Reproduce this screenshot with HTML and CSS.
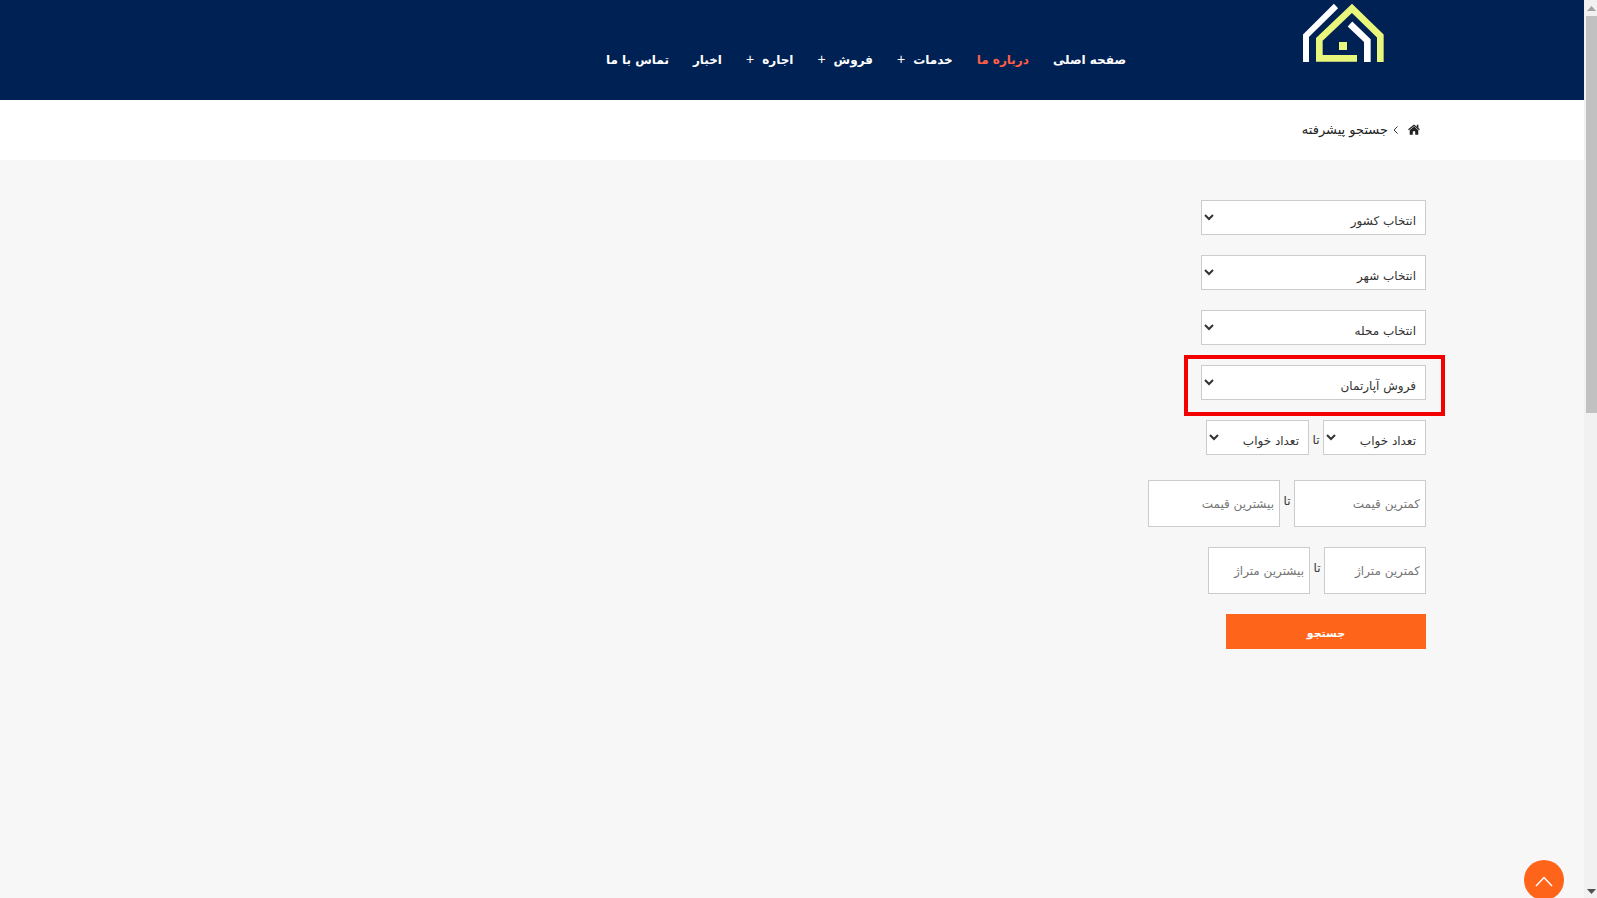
FILE: index.html
```html
<!DOCTYPE html>
<html lang="fa" dir="rtl">
<head>
<meta charset="utf-8">
<title>جستجو پیشرفته</title>
<link rel="stylesheet" href="styles.css">
</head>
<body>
<div class="scrollbar" aria-hidden="true">
  <svg class="scroll-arrow" viewBox="0 0 11 16"><path d="M1 11h9L5.500 6z" fill="#a3a3a3"/></svg>
  <div class="scroll-thumb"></div>
  <svg class="scroll-arrow scroll-end" viewBox="0 0 11 16"><path d="M1 7h9L5.500 12z" fill="#505050"/></svg>
</div>
<div class="page">
  <header class="header">
    <div class="container header-row">
      <a class="logo" href="#" aria-label="صفحه اصلی">
        <svg viewBox="66 9 249 177" fill="none">
          <path d="M78 186V107L168 18" stroke="#fff" stroke-width="18"/>
          <path d="M301 186V108L216 25L118 118V175H231" stroke="#e8f77b" stroke-width="20"/>
          <path d="M262 186V122L210 72" stroke="#fff" stroke-width="20"/>
          <path d="M177 126h24v24h-24z" fill="#e8f77b"/>
        </svg>
      </a>
      <nav class="nav">
        <a href="#">صفحه اصلی</a>
        <a class="active" href="#">درباره ما</a>
        <a class="has-menu" href="#">خدمات</a>
        <a class="has-menu" href="#">فروش</a>
        <a class="has-menu" href="#">اجاره</a>
        <a href="#">اخبار</a>
        <a href="#">تماس با ما</a>
      </nav>
    </div>
  </header>
  <div class="crumbs">
    <div class="container crumb-row">
      <a class="home" href="#" aria-label="خانه">
        <svg viewBox="0 0 12 11" fill="#222"><path d="M6 2.600L10.300 6.200V10.200Q10.300 10.700 9.800 10.700H7.200V7.300H4.800V10.700H2.200Q1.700 10.700 1.700 10.200V6.200z"/><path d="M.5 5.800L6 1.200L11.500 5.800" fill="none" stroke="#222" stroke-width="1.200"/><path d="M8.800.8h1.600v3.400L8.800 2.900z"/></svg>
      </a>
      <svg class="crumb-sep" viewBox="0 0 5 8" fill="none"><path d="M4.500.5L1 4L4.500 7.500" stroke="#333"/></svg>
      <span>جستجو پیشرفته</span>
    </div>
  </div>
  <main class="container">
    <form class="search">
      <select class="field wide" aria-label="کشور"><option>انتخاب کشور</option></select>
      <select class="field wide" aria-label="شهر"><option>انتخاب شهر</option></select>
      <select class="field wide" aria-label="محله"><option>انتخاب محله</option></select>
      <div class="marked"><select class="field wide" aria-label="نوع ملک"><option>فروش آپارتمان</option></select></div>
      <div class="range rooms">
        <select class="field" aria-label="کمترین تعداد خواب"><option>تعداد خواب</option></select>
        <span class="to">تا</span>
        <select class="field" aria-label="بیشترین تعداد خواب"><option>تعداد خواب</option></select>
      </div>
      <div class="range price">
        <input class="field" type="text" placeholder="کمترین قیمت" aria-label="کمترین قیمت">
        <span class="to">تا</span>
        <input class="field" type="text" placeholder="بیشترین قیمت" aria-label="بیشترین قیمت">
      </div>
      <div class="range area">
        <input class="field" type="text" placeholder="کمترین متراژ" aria-label="کمترین متراژ">
        <span class="to">تا</span>
        <input class="field" type="text" placeholder="بیشترین متراژ" aria-label="بیشترین متراژ">
      </div>
      <button class="submit" type="submit">جستجو</button>
    </form>
  </main>
  <button class="to-top" type="button" aria-label="بازگشت به بالا">
    <svg viewBox="0 0 18 11" fill="none"><path d="M1 10L9 1.500L17 10" stroke="#fff" stroke-width="1.500"/></svg>
  </button>
</div>
</body>
</html>
```
FILE: styles.css
```css
* { box-sizing: border-box; }

body {
  margin: 0;
  display: flex;
  height: 100vh;
  overflow: hidden;
  background: #f7f7f7;
  color: #333;
  font: 12px/20px "DejaVu Sans", sans-serif;
}

a { color: inherit; text-decoration: none; }
svg { display: block; }

.page { flex: 1; min-width: 0; }
.container { max-width: 1268px; margin: 0 auto; }

.header { background: #002154; color: #fff; }
.header-row {
  display: flex;
  align-items: flex-start;
  height: 100px;
  padding-right: 41px;
}
.logo { margin-top: 3px; }
.logo svg { width: 83px; height: 59px; }

.nav {
  display: flex;
  gap: 24px;
  margin: 48px 176px 0 0;
  font-size: 12px;
  font-weight: bold;
  line-height: 24px;
  white-space: nowrap;
}
.nav .active { color: #ff5f45; }
.has-menu::after {
  content: "+";
  margin-right: 8px;
  font: 14px "Liberation Sans", sans-serif;
}

.crumbs { background: #fff; color: #222; font-size: 13px; }
.crumb-row {
  display: flex;
  align-items: center;
  height: 60px;
  padding-right: 6px;
}
.home { padding-bottom: 2px; }
.home svg { width: 12px; height: 11px; }
.crumb-sep { width: 5px; height: 8px; margin: 0 10px 0 5px; }

.search {
  display: flex;
  flex-direction: column;
  align-items: flex-start;
  gap: 20px;
  padding-top: 40px;
}
.field {
  height: 35px;
  padding: 6px 5px 0;
  border: 1px solid #ccc;
  border-radius: 0;
  background-color: #fff;
  color: #333;
  font: inherit;
}
.wide { width: 225px; }
.marked { position: relative; display: flex; }
.marked::after {
  content: "";
  position: absolute;
  inset: -10px -19px -16px -17px;
  border: 4px solid #f30000;
  pointer-events: none;
}

.range { display: flex; align-items: center; }
.to { width: 14px; text-align: center; font-size: 12px; }
.rooms { margin-bottom: 5px; }
.rooms .field { width: 103px; }
.rooms .to { padding-top: 4px; }
.price .field { width: 132px; height: 47px; padding-top: 0; }
.area .field { width: 102px; height: 47px; padding-top: 0; }
.price .to, .area .to { padding-bottom: 6px; }
.field::placeholder { color: #757575; opacity: 1; }

.submit {
  width: 200px;
  height: 35px;
  padding: 4px 0 0;
  border: 0;
  background: #ff641b;
  color: #fff;
  font: bold 11px "DejaVu Sans", sans-serif;
}

.to-top {
  position: fixed;
  right: 33px;
  bottom: -2px;
  display: flex;
  align-items: center;
  justify-content: center;
  width: 40px;
  height: 40px;
  padding: 3px 0 0 0;
  border: 0;
  border-radius: 50%;
  background: #ff641b;
}
.to-top svg { width: 18px; height: 11px; }

.scrollbar {
  display: flex;
  flex-direction: column;
  width: 13px;
  padding-left: 2px;
  background: #f1f1f1;
}
.scroll-arrow { width: 11px; height: 16px; }
.scroll-thumb { height: 44.2%; background: #c1c1c1; }
.scroll-end { margin-top: auto; }
```
